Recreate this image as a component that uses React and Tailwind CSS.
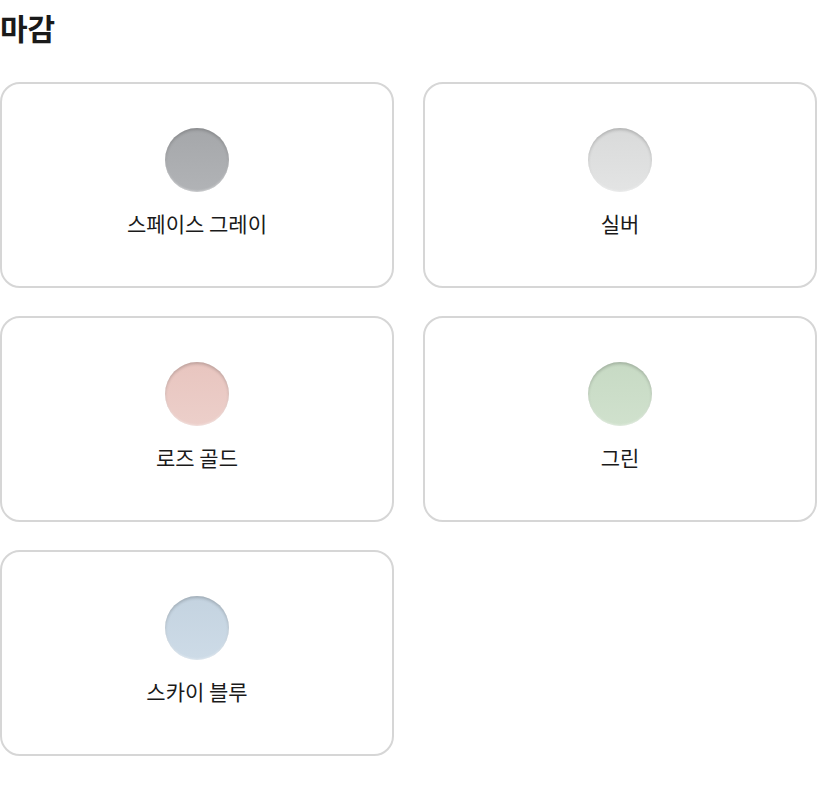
import React from "react";

const items = [
  { name: "스페이스 그레이", bg: "bg-[linear-gradient(180deg,#a5a7aa,#b1b3b6)]" },
  { name: "실버", bg: "bg-[linear-gradient(180deg,#d9dada,#e3e4e4)]" },
  { name: "로즈 골드", bg: "bg-[linear-gradient(180deg,#e8c5bf,#eccfca)]" },
  { name: "그린", bg: "bg-[linear-gradient(180deg,#c7dac4,#d0e1cd)]" },
  { name: "스카이 블루", bg: "bg-[linear-gradient(180deg,#c4d3e0,#cddbe7)]" },
];

export default function App() {
  return (
    <div className="w-[817px] bg-white text-[#1a1a1a] [font-family:'Noto_Sans_CJK_KR','Noto_Sans',sans-serif]">
      <h1 className="text-[30px] font-bold leading-[54px] mb-[28px]">마감</h1>
      <div className="grid grid-cols-2 gap-x-[29px] gap-y-[28px]">
        {items.map((it) => (
          <div
            key={it.name}
            className="h-[206px] rounded-[20px] border-2 border-[#d6d6d6] flex flex-col items-center justify-center"
          >
            <div
              className={`w-[64px] h-[64px] rounded-full ${it.bg} shadow-[inset_0_2px_3px_rgba(0,0,0,0.18),inset_0_-1px_2px_rgba(255,255,255,0.4)] -mt-[4px]`}
            />
            <div className="mt-[16px] text-[21px] leading-[30px]">{it.name}</div>
          </div>
        ))}
      </div>
    </div>
  );
}
